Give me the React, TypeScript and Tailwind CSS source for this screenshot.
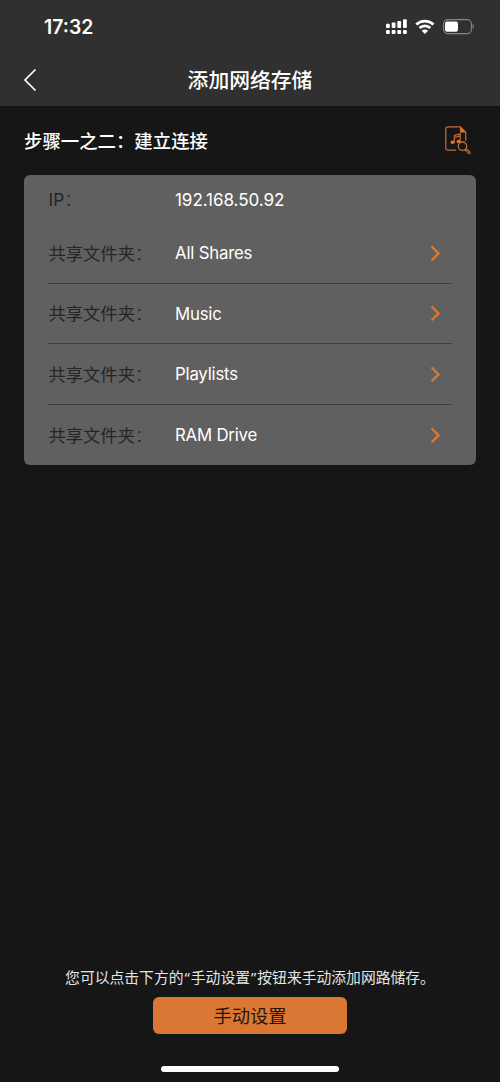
import type { ReactNode } from "react";

const SHARED_FOLDERS = ["All Shares", "Music", "Playlists", "RAM Drive"];

function SignalIcon() {
  return (
    <svg width="21" height="16" viewBox="0 0 21 16" fill="#fff">
      <rect x="0" y="4.8" width="3.8" height="4.2" rx="1" />
      <rect x="5.7" y="3.6" width="3.8" height="5.4" rx="1" />
      <rect x="11.3" y="1.9" width="3.8" height="7.1" rx="1" />
      <rect x="17" y="0.2" width="3.8" height="8.8" rx="1" />
      <rect x="0" y="11" width="3.8" height="4" rx="1" />
      <rect x="5.7" y="11" width="3.8" height="4" rx="1" />
      <rect x="11.3" y="11" width="3.8" height="4" rx="1" />
      <rect x="17" y="11" width="3.8" height="4" rx="1" />
    </svg>
  );
}

function WifiIcon() {
  return (
    <svg width="20" height="16" viewBox="0 0 20 16" fill="none">
      <path d="M1.3 5.6a12.4 12.4 0 0 1 17.2 0" stroke="#fff" strokeWidth="2.8" />
      <path d="M4.5 9a7.8 7.8 0 0 1 10.8 0" stroke="#fff" strokeWidth="2.7" />
      <path d="M9.9 14.9 6.7 11.8a4.6 4.6 0 0 1 6.4 0Z" fill="#fff" />
    </svg>
  );
}

function BatteryIcon() {
  return (
    <svg width="32" height="16" viewBox="0 0 32 16" fill="none">
      <rect x="0.6" y="0.6" width="27.8" height="14" rx="4" stroke="#858585" strokeWidth="1.1" />
      <rect x="2" y="2.5" width="13" height="10.2" rx="2" fill="#fff" />
      <path d="M29.6 5.1c1.8.7 1.8 4.3 0 5Z" fill="#858585" />
    </svg>
  );
}

function MusicSearchIcon() {
  return (
    <svg width="26" height="30" viewBox="0 0 26 30" fill="none" stroke="#c46d38">
      <path d="M11.2 25.2H2.8a2 2 0 0 1-2-2V3.8a2 2 0 0 1 2-2h12.4l5.5 5.5v8.4" strokeWidth="1.2" />
      <path d="M15 1.6v5.8h5.8Z" fill="#d87735" stroke="none" />
      <path d="M9.4 17V10.5l5.8-1.7V16M9.4 12.5l5.8-1.7" strokeWidth="1.2" />
      <ellipse cx="7.6" cy="17.2" rx="2.1" ry="1.7" fill="#d87735" stroke="none" />
      <ellipse cx="13.6" cy="16.4" rx="2.1" ry="1.7" fill="#d87735" stroke="none" />
      <circle cx="17.5" cy="21.2" r="4.2" fill="#161616" strokeWidth="1.3" />
      <path d="m20.3 25.2 1.3-1.3 3.2 3.1a.9.9 0 0 1-1.3 1.4Z" strokeWidth="1.1" />
    </svg>
  );
}

function ChevronIcon() {
  return (
    <svg width="12" height="18" viewBox="0 0 12 18" fill="none">
      <path d="m2.2 2 6.4 6.4-6.4 6.4" stroke="#da7b3a" strokeWidth="2.2" strokeLinecap="round" />
    </svg>
  );
}

function Row({ label, children }: { label: string; children: ReactNode }) {
  return (
    <>
      <span className="w-[127px] shrink-0 pl-[0.5px] text-left text-[17.3px] text-[#262626]">
        {label}
        <span className="font-light">：</span>
      </span>
      {children}
    </>
  );
}

export default function App() {
  return (
    <div className="flex h-[1082px] w-[500px] flex-col bg-[#161616] font-['Inter','Noto_Sans_CJK_SC',sans-serif] text-white">
      <header className="h-[106px] shrink-0 bg-[#303030]">
        <div className="flex h-[54px] items-center justify-between pr-[25px] pl-11">
          <span className="pt-0.5 text-[19.4px] font-semibold">17:32</span>
          <div className="flex items-center gap-2">
            <SignalIcon />
            <WifiIcon />
            <BatteryIcon />
          </div>
        </div>
        <div className="grid h-[52px] grid-cols-[60px_1fr_60px] items-center">
          <button type="button" aria-label="返回" className="pl-[23px]">
            <svg width="14" height="24" viewBox="0 0 14 24" fill="none">
              <path d="M12.5 1.5 2 12l10.5 10.5" stroke="#fff" strokeWidth="1.7" />
            </svg>
          </button>
          <h1 className="pt-0.5 text-center text-[20.8px] font-medium">添加网络存储</h1>
        </div>
      </header>

      <main className="flex flex-1 flex-col px-6">
        <div className="flex h-[69px] items-center justify-between pr-[5px]">
          <h2 className="pt-0.5 text-[18.4px] font-medium">步骤一之二：建立连接</h2>
          <div className="pb-0.5">
            <MusicSearchIcon />
          </div>
        </div>

        <section className="h-[290px] rounded-md bg-[#606060] px-6">
          <div className="flex h-12 items-center pt-0.5">
            <Row label="IP">
              <span className="text-[17.1px] tracking-[-0.08px]">192.168.50.92</span>
            </Row>
          </div>
          <div className="divide-y divide-[#404040]">
            {SHARED_FOLDERS.map((name) => (
              <button
                key={name}
                type="button"
                className="flex h-[60.5px] w-full items-center pt-0.5 pr-[10px]"
              >
                <Row label="共享文件夹">
                  <span className="flex-1 text-left text-[16.8px] tracking-[-0.2px]">{name}</span>
                </Row>
                <ChevronIcon />
              </button>
            ))}
          </div>
        </section>
      </main>

      <footer className="flex flex-col items-center pb-2.5">
        <p className="text-[14.8px] leading-[22px] font-['Noto_Sans','Noto_Sans_CJK_SC',sans-serif] text-[#e4e4e4]">
          您可以点击下方的<span className="px-px">“</span>手动设置
          <span className="px-px">”</span>按钮来手动添加网路储存。
        </p>
        <button
          type="button"
          className="mt-[9px] h-[37px] w-[194px] rounded-md bg-[#da7734] pt-0.5 text-[18.3px] text-[#24140b]"
        >
          手动设置
        </button>
        <div className="mt-8 h-1.5 w-[178px] rounded-full bg-white" />
      </footer>
    </div>
  );
}
